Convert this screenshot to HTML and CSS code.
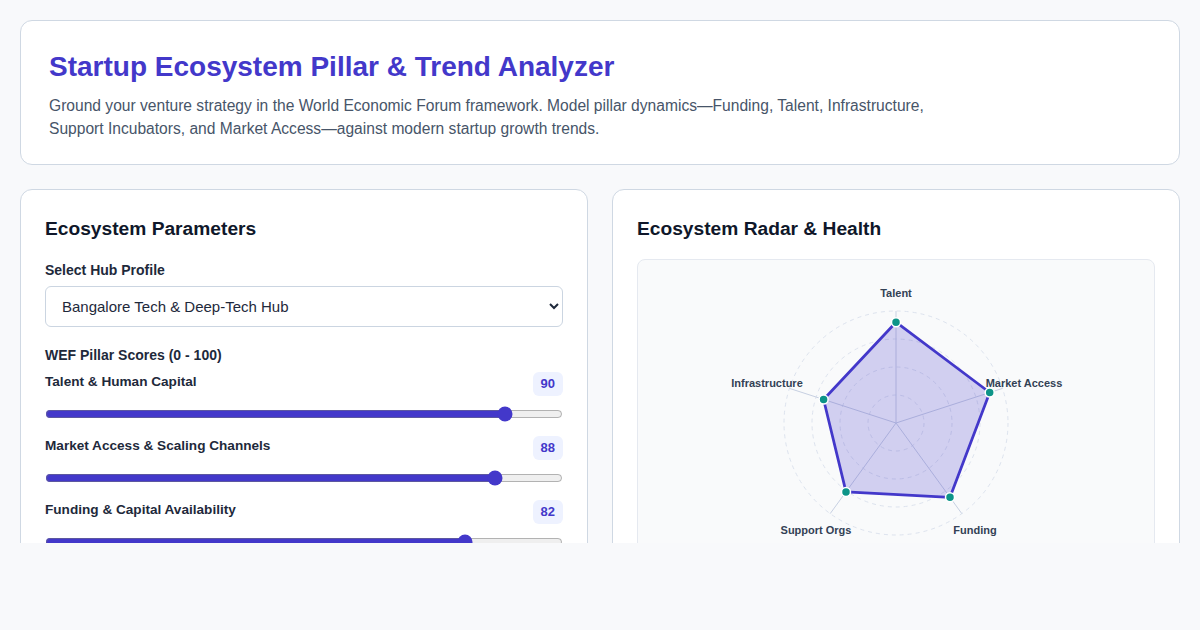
FILE: index.html
```html
<!DOCTYPE html>
<html lang="en">
<head>
<meta charset="utf-8">
<title>Startup Ecosystem Pillar &amp; Trend Analyzer</title>
<link rel="stylesheet" href="styles.css">
</head>
<body>
<div class="viewport">
  <header class="card header-card">
    <h1 class="title">Startup Ecosystem Pillar &amp; Trend Analyzer</h1>
    <p class="subtitle">Ground your venture strategy in the World Economic Forum framework. Model pillar dynamics—Funding, Talent, Infrastructure, Support Incubators, and Market Access—against modern startup growth trends.</p>
  </header>

  <main class="grid">
    <section class="card panel">
      <h2 class="panel-title">Ecosystem Parameters</h2>
      <label class="field-label" for="hub">Select Hub Profile</label>
      <select id="hub" class="select">
        <option>Bangalore Tech &amp; Deep-Tech Hub</option>
      </select>
      <div class="field-label scores-label">WEF Pillar Scores (0 - 100)</div>

      <div class="slider-row">
        <div class="slider-head">
          <span class="slider-label">Talent &amp; Human Capital</span>
          <span class="badge">90</span>
        </div>
        <input class="range" type="range" min="0" max="100" value="90">
      </div>
      <div class="slider-row">
        <div class="slider-head">
          <span class="slider-label">Market Access &amp; Scaling Channels</span>
          <span class="badge">88</span>
        </div>
        <input class="range" type="range" min="0" max="100" value="88">
      </div>
      <div class="slider-row">
        <div class="slider-head">
          <span class="slider-label">Funding &amp; Capital Availability</span>
          <span class="badge">82</span>
        </div>
        <input class="range" type="range" min="0" max="100" value="82">
      </div>
      <div class="slider-row">
        <div class="slider-head">
          <span class="slider-label">Support Orgs &amp; Incubators</span>
          <span class="badge">76</span>
        </div>
        <input class="range" type="range" min="0" max="100" value="76">
      </div>
    </section>

    <section class="card panel">
      <h2 class="panel-title radar-title">Ecosystem Radar &amp; Health</h2>
      <div class="radar-box">
        <svg class="radar" width="516" height="340" viewBox="0 0 516 340">
          <g class="rings">
            <circle cx="258" cy="163" r="28"/>
            <circle cx="258" cy="163" r="56"/>
            <circle cx="258" cy="163" r="84"/>
            <circle cx="258" cy="163" r="112"/>
          </g>
          <g class="axes">
            <line x1="258" y1="163" x2="258" y2="51"/>
            <line x1="258" y1="163" x2="364.5" y2="128.4"/>
            <line x1="258" y1="163" x2="323.8" y2="253.6"/>
            <line x1="258" y1="163" x2="192.2" y2="253.6"/>
            <line x1="258" y1="163" x2="151.5" y2="128.4"/>
          </g>
          <polygon class="shape" points="258,62.2 351.7,132.5 312,237.3 208,231.9 185.6,139.5"/>
          <g class="pts">
            <circle cx="258" cy="62.2" r="4.5"/>
            <circle cx="351.7" cy="132.5" r="4.5"/>
            <circle cx="312" cy="237.3" r="4.5"/>
            <circle cx="208" cy="231.9" r="4.5"/>
            <circle cx="185.6" cy="139.5" r="4.5"/>
          </g>
          <g class="labels">
            <text x="258" y="34">Talent</text>
            <text x="386" y="124">Market Access</text>
            <text x="337" y="271">Funding</text>
            <text x="178" y="271">Support Orgs</text>
            <text x="129" y="124">Infrastructure</text>
          </g>
        </svg>
      </div>
    </section>
  </main>
</div>
</body>
</html>
```

FILE: styles.css
```css
* { box-sizing: border-box; }

html, body {
  margin: 0;
  padding: 0;
  background: #f8f9fb;
  font-family: "Liberation Sans", Arial, sans-serif;
  color: #0f172a;
}

.viewport {
  height: 543px;
  overflow: hidden;
  padding: 20px 20px 0;
}

.card {
  background: #ffffff;
  border: 1px solid #cfd8e3;
  border-radius: 12px;
}

.header-card {
  padding: 29px 28px 24px;
}

.title {
  margin: 0 0 10px;
  font-size: 28px;
  line-height: 34px;
  font-weight: 700;
  color: #4338ca;
}

.subtitle {
  margin: 0;
  max-width: 900px;
  font-size: 15.6px;
  line-height: 23px;
  color: #475569;
}

.grid {
  margin-top: 24px;
  display: grid;
  grid-template-columns: 1fr 1fr;
  gap: 24px;
}

.panel {
  padding: 27px 24px 24px;
  min-height: 420px;
}

.panel-title {
  margin: 0 0 20px;
  font-size: 19.2px;
  line-height: 24px;
  font-weight: 700;
  color: #0f172a;
}

.radar-title {
  margin-bottom: 18px;
}

.field-label {
  display: block;
  font-size: 14px;
  line-height: 18px;
  font-weight: 700;
  color: #1e293b;
  margin-bottom: 7px;
}

.select {
  display: block;
  width: 100%;
  height: 41px;
  padding: 0 12px;
  margin: 0 0 19px;
  border: 1px solid #cbd5e1;
  border-radius: 6px;
  background: #ffffff;
  font-family: "Liberation Sans", Arial, sans-serif;
  font-size: 15px;
  color: #1e293b;
}

.scores-label {
  margin-bottom: 8px;
}

.slider-row {
  margin-bottom: 14px;
}

.slider-head {
  display: flex;
  justify-content: space-between;
  align-items: flex-start;
}

.slider-label {
  padding-top: 1px;
  font-size: 13.6px;
  line-height: 18px;
  font-weight: 700;
  color: #1e293b;
}

.badge {
  display: block;
  height: 24px;
  background: #eef2ff;
  color: #4338ca;
  font-size: 13px;
  font-weight: 700;
  line-height: 24px;
  padding: 0 8px;
  border-radius: 6px;
}

.range {
  display: block;
  width: 100%;
  margin: 10px 0 0;
  accent-color: #4338ca;
}

.radar-box {
  background: #f9fafb;
  border: 1px solid #e5e9f0;
  border-radius: 8px;
  height: 360px;
}

.radar {
  display: block;
}

.rings circle {
  fill: none;
  stroke: #dde3ee;
  stroke-width: 1;
  stroke-dasharray: 4 4;
}

.axes line {
  stroke: #c7d0e2;
  stroke-width: 1;
}

.shape {
  fill: rgba(67, 56, 202, 0.22);
  stroke: #4338ca;
  stroke-width: 2.75;
  stroke-linejoin: round;
}

.pts circle {
  fill: #0d9488;
  stroke: #ffffff;
  stroke-width: 1.5;
}

.labels text {
  font-family: "Liberation Sans", Arial, sans-serif;
  font-size: 11px;
  font-weight: 700;
  fill: #334155;
  text-anchor: middle;
  dominant-baseline: middle;
}
```
